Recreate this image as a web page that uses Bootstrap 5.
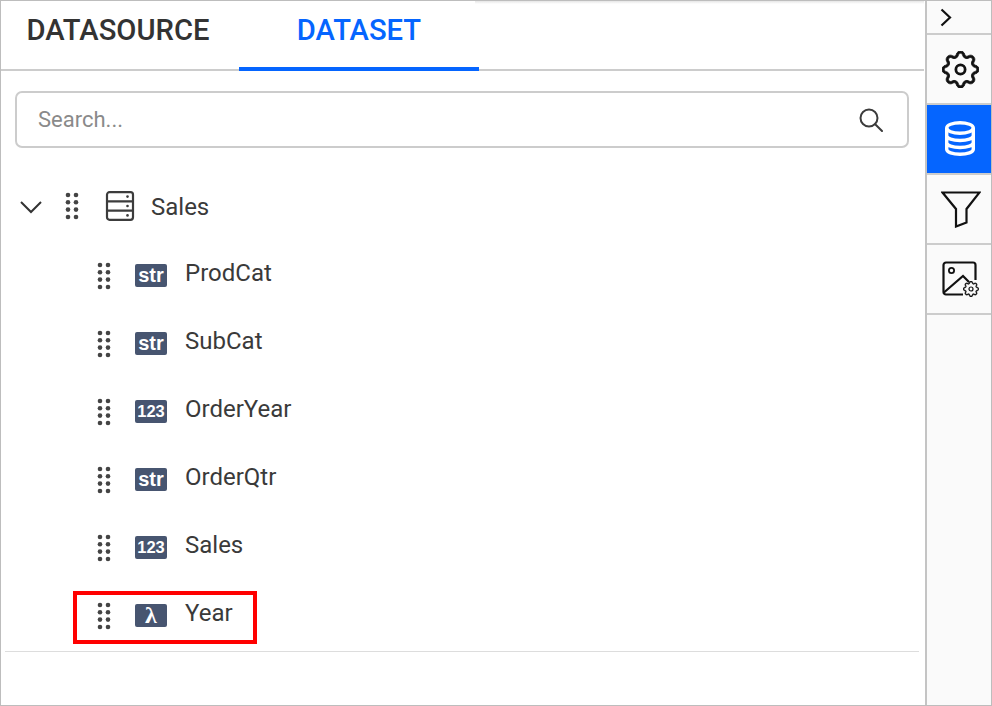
<!DOCTYPE html>
<html lang="en"><head><meta charset="utf-8"><title>Dataset</title>
<link href="https://cdn.jsdelivr.net/npm/bootstrap@5.3.0/dist/css/bootstrap.min.css" rel="stylesheet">
<style>
html,body{height:100%;margin:0;overflow:hidden}
body{font-family:Roboto,"Liberation Sans",sans-serif;color:#3a3a3a;background:#fff}
.shell{height:706px;border:1px solid #bdbdbd}
.main-pane{width:923px;min-width:0;flex:none}
.tabbar{height:70px;border-bottom:2px solid #ccc;position:relative}
.tabbar .nav-link{width:240px;height:70px;padding:11px 0 0;text-align:center;font-size:29.2px;font-weight:500;line-height:36px;color:#333;border-bottom:4px solid transparent;border-radius:0}
.tabbar .nav-link:first-child{width:238px;padding-right:4px}
.tabbar .nav-link.active{color:#0565ff;border-bottom-color:#0565ff}
.top-fade{position:absolute;left:474px;right:0;top:0;height:3px;background:linear-gradient(#e6e6e6,#fff);pointer-events:none}
.search-box{margin:20px 15px 0 14px;height:57px;border:2px solid #ccc;border-radius:7px;padding:0 24px 0 21px}
.search-box .form-control{border:0;padding:0;box-shadow:none;font-size:22px;color:#333;background:transparent}
.search-box .form-control::placeholder{color:#8a8a8a;opacity:1}
.tree-list{margin:25px 0 0}
.tree-head{height:68px;font-size:24px}
.tree-head .chev{margin-left:17px;width:26px}
.tree-head .grip{margin-left:21px;margin-top:-2px}
.tree-head .srv{margin-left:26px;margin-top:-2px}
.tree-head .tname{margin-left:16px;margin-top:-1px}
.tree-item{height:68px;font-size:24px;position:relative}
.tree-head+.tree-item{margin-top:-2px}
.grip{display:block;flex:none}
.tree-item .grip{margin-left:96px;margin-top:5px}
.type-tag{width:32px;height:23px;margin-left:24px;margin-top:5px;border-radius:2px;background:#475570;color:#fff;font-family:"Liberation Sans",sans-serif;font-weight:700;font-size:20px;line-height:23px;text-align:center;flex:none}
.type-tag.num-tag{font-size:16.500px;line-height:23px}
.type-tag.fx-tag{font-family:"Liberation Serif",serif;font-size:24px;line-height:23px}
.tree-item .tname{margin-left:18px;margin-top:-1px;line-height:28px}
.red-mark{position:absolute;left:72px;top:12px;width:184px;height:53px;border:4px solid #f00;pointer-events:none}
.tree-end{margin:4px 5px 0 4px;border-top:1px solid #ddd}
.side-rail{width:66px;flex:none;margin-left:1px;border-left:2px solid #c4c4c4;background:#fafafa}
.rail-btn{height:70px;padding-left:2px;border-bottom:2px solid #ccc;color:#111}
.rail-btn.rail-top{height:34px;padding-left:13px}
.rail-btn.on{background:#0565ff;color:#fff}
.funnel-ico{margin-left:2px}
.db-ico{margin-top:-2px}
</style></head><body>
<svg width="0" height="0" class="d-block position-absolute"><defs>
<symbol id="gearShape" viewBox="0 0 16 16"><path fill="currentColor" stroke="currentColor" stroke-width=".35" d="M9.796 1.343c-.527-1.79-3.065-1.79-3.592 0l-.094.319a.873.873 0 0 1-1.255.52l-.292-.16c-1.64-.892-3.433.902-2.54 2.541l.159.292a.873.873 0 0 1-.52 1.255l-.319.094c-1.79.527-1.79 3.065 0 3.592l.319.094a.873.873 0 0 1 .52 1.255l-.16.292c-.892 1.64.901 3.434 2.541 2.54l.292-.159a.873.873 0 0 1 1.255.52l.094.319c.527 1.79 3.065 1.79 3.592 0l.094-.319a.873.873 0 0 1 1.255-.52l.292.16c1.64.893 3.434-.902 2.54-2.541l-.159-.292a.873.873 0 0 1 .52-1.255l.319-.094c1.79-.527 1.79-3.065 0-3.592l-.319-.094a.873.873 0 0 1-.52-1.255l.16-.292c.893-1.64-.902-3.433-2.541-2.54l-.292.159a.873.873 0 0 1-1.255-.52l-.094-.319zm-2.633.283c.246-.835 1.428-.835 1.674 0l.094.319a1.873 1.873 0 0 0 2.693 1.115l.291-.16c.764-.415 1.6.42 1.184 1.185l-.159.292a1.873 1.873 0 0 0 1.116 2.692l.318.094c.835.246.835 1.428 0 1.674l-.319.094a1.873 1.873 0 0 0-1.115 2.693l.16.291c.415.764-.42 1.6-1.185 1.184l-.291-.159a1.873 1.873 0 0 0-2.693 1.116l-.094.318c-.246.835-1.428.835-1.674 0l-.094-.319a1.873 1.873 0 0 0-2.692-1.115l-.292.16c-.764.415-1.6-.42-1.184-1.185l.159-.291A1.873 1.873 0 0 0 1.945 8.93l-.319-.094c-.835-.246-.835-1.428 0-1.674l.319-.094A1.873 1.873 0 0 0 3.06 4.377l-.16-.292c-.415-.764.42-1.6 1.185-1.184l.292.159a1.873 1.873 0 0 0 2.692-1.115l.094-.319z"/><circle cx="8" cy="8" r="2" fill="none" stroke="currentColor" stroke-width="1.200"/></symbol>
<symbol id="gripDots" viewBox="0 0 14 28"><g fill="#444"><circle cx="3" cy="3" r="2.300"/><circle cx="11" cy="3" r="2.300"/><circle cx="3" cy="10.300" r="2.300"/><circle cx="11" cy="10.300" r="2.300"/><circle cx="3" cy="17.600" r="2.300"/><circle cx="11" cy="17.600" r="2.300"/><circle cx="3" cy="25" r="2.300"/><circle cx="11" cy="25" r="2.300"/></g></symbol>
</defs></svg>
<div class="shell d-flex">
  <div class="main-pane d-flex flex-column">
    <nav class="tabbar nav flex-nowrap">
      <a class="nav-link" href="#">DATASOURCE</a>
      <a class="nav-link active" href="#">DATASET</a>
      <span class="top-fade"></span>
    </nav>
    <div class="search-box d-flex align-items-center">
      <input class="form-control" type="text" placeholder="Search...">
      <svg class="flex-shrink-0" width="24" height="24" viewBox="0 0 24 24" fill="none" stroke="#3c3c3c" stroke-width="2"><circle cx="10" cy="10" r="8.500"/><path d="M16.200 16.200 23 23" stroke-linecap="round"/></svg>
    </div>
    <ul class="tree-list list-unstyled">
      <li class="tree-head d-flex align-items-center">
        <svg class="chev" width="26" height="14" viewBox="0 0 26 14" fill="none" stroke="#333" stroke-width="2"><path d="M3 2 13 12 23 2"/></svg>
        <svg class="grip" width="14" height="28"><use href="#gripDots"/></svg>
        <svg class="srv" width="30" height="30" viewBox="0 0 30 30" fill="none" stroke="#3c3c3c" stroke-width="2.200"><rect x="2" y="1.200" width="26" height="27.600" rx="2.500"/><path d="M2 10.300h26M2 19.600h26"/><g fill="#3c3c3c" stroke="none"><circle cx="22.500" cy="5.600" r="1.300"/><circle cx="22.500" cy="15" r="1.300"/><circle cx="22.500" cy="24.400" r="1.300"/></g></svg>
        <span class="tname">Sales</span>
      </li>
      <li class="tree-item d-flex align-items-center"><svg class="grip" width="14" height="28"><use href="#gripDots"/></svg><span class="type-tag">str</span><span class="tname">ProdCat</span></li>
      <li class="tree-item d-flex align-items-center"><svg class="grip" width="14" height="28"><use href="#gripDots"/></svg><span class="type-tag">str</span><span class="tname">SubCat</span></li>
      <li class="tree-item d-flex align-items-center"><svg class="grip" width="14" height="28"><use href="#gripDots"/></svg><span class="type-tag num-tag">123</span><span class="tname">OrderYear</span></li>
      <li class="tree-item d-flex align-items-center"><svg class="grip" width="14" height="28"><use href="#gripDots"/></svg><span class="type-tag">str</span><span class="tname">OrderQtr</span></li>
      <li class="tree-item d-flex align-items-center"><svg class="grip" width="14" height="28"><use href="#gripDots"/></svg><span class="type-tag num-tag">123</span><span class="tname">Sales</span></li>
      <li class="tree-item d-flex align-items-center"><svg class="grip" width="14" height="28"><use href="#gripDots"/></svg><span class="type-tag fx-tag">λ</span><span class="tname">Year</span><span class="red-mark"></span></li>
    </ul>
    <div class="tree-end"></div>
  </div>
  <div class="side-rail d-flex flex-column">
    <div class="rail-btn rail-top d-flex align-items-center"><svg width="12" height="19" viewBox="0 0 12 19" fill="none" stroke="#111" stroke-width="2.200"><path d="M1.500 1.500 10 9.500 1.500 17.500"/></svg></div>
    <div class="rail-btn d-flex align-items-center justify-content-center"><svg width="37" height="37"><use href="#gearShape"/></svg></div>
    <div class="rail-btn on d-flex align-items-center justify-content-center"><svg class="db-ico" width="30" height="35" viewBox="0 0 30 35" fill="none" stroke="#fff" stroke-width="3.400"><ellipse cx="15" cy="7" rx="13.300" ry="5.300"/><path d="M1.700 7v21.300c0 3 6 5 13.300 5s13.300-2 13.300-5V7M1.700 14.500c0 3 6 5 13.300 5s13.300-2 13.300-5M1.700 21.500c0 3 6 5 13.300 5s13.300-2 13.300-5"/></svg></div>
    <div class="rail-btn d-flex align-items-center justify-content-center"><svg class="funnel-ico" width="40" height="37" viewBox="0 0 40 37" fill="none" stroke="#111" stroke-width="2.200"><path d="M1.500 1.500h37L25.500 18v13.500L15 35.500V18z"/></svg></div>
    <div class="rail-btn d-flex align-items-center justify-content-center"><svg width="37" height="36" viewBox="0 0 37 36" fill="none" stroke="#111" stroke-width="2.200"><path d="M21 33.500H4A2.500 2.500 0 0 1 1.500 31V4A2.500 2.500 0 0 1 4 1.500h27A2.500 2.500 0 0 1 33.500 4V19"/><circle cx="9.500" cy="9.500" r="2.600" stroke-width="1.800"/><path d="M2.500 31 21 15l5.500 5.500" stroke-linecap="round"/><use href="#gearShape" x="21" y="20" width="16" height="16" stroke="none"/></svg></div>
  </div>
</div>
<script src="https://cdn.jsdelivr.net/npm/bootstrap@5.3.0/dist/js/bootstrap.bundle.min.js"></script>
</body></html>
